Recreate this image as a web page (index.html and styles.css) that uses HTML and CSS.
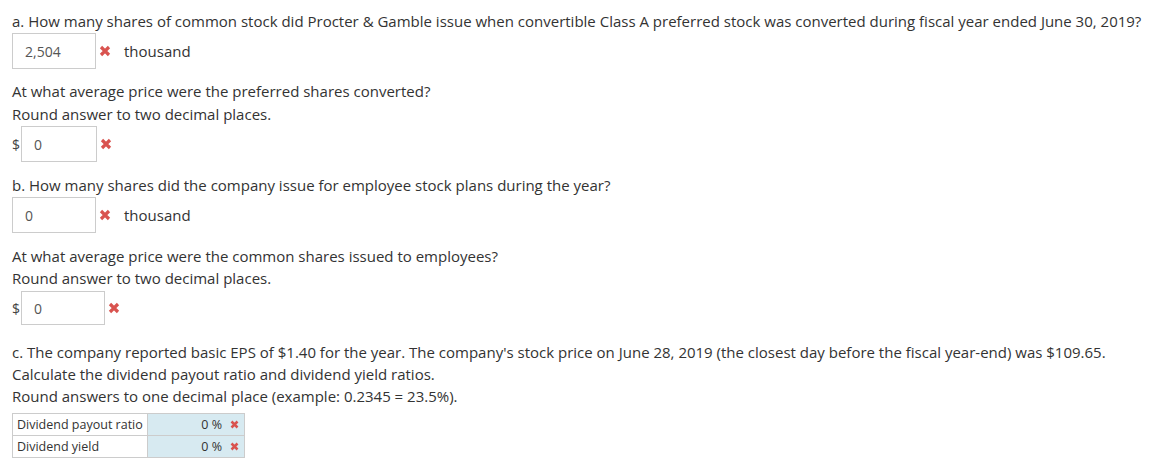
FILE: index.html
```html
<!DOCTYPE html>
<html>
<head>
<meta charset="utf-8">
<link rel="stylesheet" href="styles.css">
</head>
<body>
<div class="page">
  <p class="q first">a. How many shares of common stock did Procter &amp; Gamble issue when convertible Class A preferred stock was converted during fiscal year ended June 30, 2019?</p>
  <div class="answer">
    <span class="box w84">2,504</span>
    <svg class="x" viewBox="0 0 12 12"><path d="M2 2 L10 10 M10 2 L2 10"/></svg>
    <span class="unit">thousand</span>
  </div>

  <p class="q gap">At what average price were the preferred shares converted?<br>Round answer to two decimal places.</p>
  <div class="answer">
    <span class="dollar">$</span>
    <span class="box w76">0</span>
    <svg class="x" viewBox="0 0 12 12"><path d="M2 2 L10 10 M10 2 L2 10"/></svg>
  </div>

  <p class="q gapb">b. How many shares did the company issue for employee stock plans during the year?</p>
  <div class="answer">
    <span class="box w84">0</span>
    <svg class="x" viewBox="0 0 12 12"><path d="M2 2 L10 10 M10 2 L2 10"/></svg>
    <span class="unit">thousand</span>
  </div>

  <p class="q tight">At what average price were the common shares issued to employees?<br>Round answer to two decimal places.</p>
  <div class="answer short">
    <span class="dollar">$</span>
    <span class="box w84">0</span>
    <svg class="x" viewBox="0 0 12 12"><path d="M2 2 L10 10 M10 2 L2 10"/></svg>
  </div>

  <p class="q gapc">c. The company reported basic EPS of $1.40 for the year. The company's stock price on June 28, 2019 (the closest day before the fiscal year-end) was $109.65.<br>Calculate the dividend payout ratio and dividend yield ratios.<br>Round answers to one decimal place (example: 0.2345 = 23.5%).</p>

  <table class="ratios">
    <tr>
      <td class="label">Dividend payout ratio</td>
      <td class="val">0 %<svg class="xs" viewBox="0 0 12 12"><path d="M2 2 L10 10 M10 2 L2 10"/></svg></td>
    </tr>
    <tr>
      <td class="label">Dividend yield</td>
      <td class="val">0 %<svg class="xs" viewBox="0 0 12 12"><path d="M2 2 L10 10 M10 2 L2 10"/></svg></td>
    </tr>
  </table>
</div>
</body>
</html>
```

FILE: styles.css
```css
html, body {
  margin: 0;
  padding: 0;
  background: #fff;
}
.page {
  font-family: "Open Sans", "DejaVu Sans", sans-serif;
  font-size: 15px;
  color: #333;
  padding: 10px 12px 0 12px;
}
.q {
  margin: 0;
  line-height: 23px;
}
.q.gap {
  margin-top: 11px;
}
.q.gapb {
  margin-top: 12px;
}
.q.tight {
  line-height: 22px;
  margin-top: 12px;
}
.q.gapc {
  margin-top: 16px;
  line-height: 22px;
}
.answer {
  display: flex;
  align-items: center;
  height: 36px;
}
.answer.short {
  height: 34px;
  margin-top: 2px;
}
.box {
  box-sizing: border-box;
  height: 100%;
  border: 1px solid #ccc;
  display: flex;
  align-items: center;
  padding-left: 12px;
  color: #555;
  font-size: 14px;
}
.w84 { width: 84px; }
.w76 { width: 76px; }
.dollar {
  width: 9px;
  color: #444;
  font-size: 14px;
}
.x {
  width: 12px;
  height: 12px;
  margin-left: 3px;
  stroke: #d9534f;
  stroke-width: 3.2;
  fill: none;
}
.unit {
  margin-left: 13px;
}
.ratios {
  margin-top: 6px;
  border-collapse: collapse;
  font-size: 12.5px;
}
.ratios td {
  border: 1px solid #ccc;
  height: 21px;
  padding: 0 4px;
}
.ratios .label {
  width: 126px;
  color: #333;
  white-space: nowrap;
}
.ratios .val {
  width: 87px;
  background: #d7eaf1;
  text-align: right;
  padding-right: 5px;
}
.xs {
  width: 9px;
  height: 9px;
  margin-left: 8px;
  stroke: #d9534f;
  stroke-width: 3.4;
  fill: none;
}
```
